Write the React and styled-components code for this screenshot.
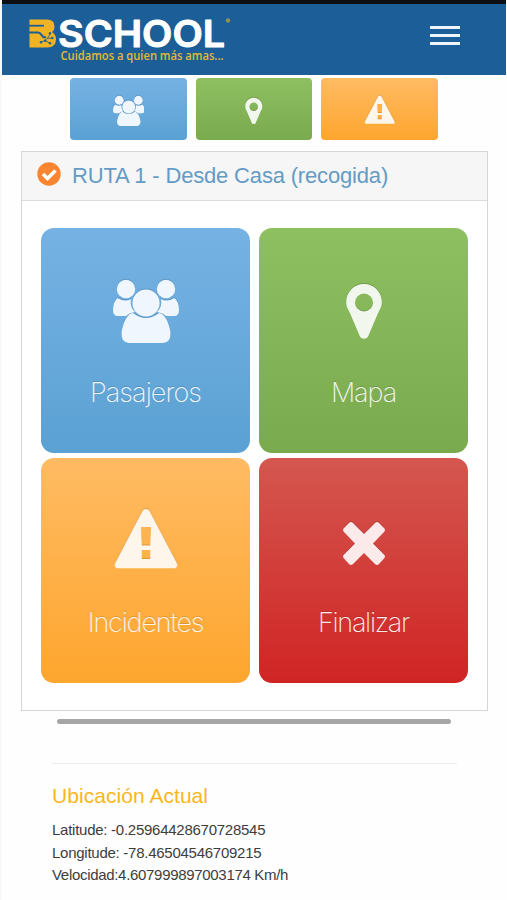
import styled, { createGlobalStyle } from "styled-components"

const GlobalStyle = createGlobalStyle`
    * {
        box-sizing: border-box;
    }
    body {
        margin: 0;
        background-color: #fefefe;
        font-family: "Liberation Sans", Arial, sans-serif;
    }
`

const Container = styled.div`
    height: 900px;
    padding-right: 1px;
    border-left: 2px solid #f8f8f8;
    overflow: hidden;
`

const Header = styled.header`
    height: 75px;
    margin-bottom: 3px;
    padding: 8px 46px 0 25px;
    display: flex;
    justify-content: space-between;
    border-top: 4px solid #0c1013;
    background-color: #1b5e98;
`

const Logo = styled.svg`
    width: 206px;
    height: 58px;
    display: block;
    overflow: visible;
`

const MenuButton = styled.div`
    width: 30px;
    height: 19px;
    margin-top: 14px;
    display: flex;
    flex-direction: column;
    justify-content: space-between;
`

const MenuLine = styled.span`
    height: 3px;
    background-color: #eef5fa;
`

const Shortcuts = styled.nav`
    display: flex;
    justify-content: center;
    gap: 9px;
    margin-bottom: 11px;
`

const Shortcut = styled.div`
    width: 116.6px;
    height: 62px;
    padding-top: 16.5px;
    display: flex;
    justify-content: center;
    border-radius: 4px;
    background-image: linear-gradient(${(props) => props.$colors});
`

const Panel = styled.section`
    width: 467px;
    height: 560px;
    margin-left: 19px;
    border: 1px solid #d6d6d6;
    background-color: #fff;
`

const PanelHeader = styled.div`
    height: 49px;
    padding: 0 0 1px 14.5px;
    display: flex;
    align-items: center;
    gap: 11.5px;
    border-bottom: 1px solid #dcdcdc;
    background-color: #f6f6f6;
`

const CheckIcon = styled.svg`
    width: 24px;
    height: 24px;
    margin-top: -4px;
`

const Title = styled.h1`
    margin: 0;
    font-size: 22px;
    font-weight: 400;
    letter-spacing: -0.17px;
    white-space: nowrap;
    color: #649bc5;
`

const Tiles = styled.div`
    padding: 27px 18px 0 19px;
    display: grid;
    grid-template-columns: 209px 209px;
    grid-auto-rows: 224.5px;
    gap: 5.5px 9px;
`

const Tile = styled.div`
    padding-top: 50px;
    display: flex;
    flex-direction: column;
    align-items: center;
    border-radius: 13px;
    background-image: linear-gradient(${(props) => props.$colors});
`

const Icon = styled.svg`
    width: ${(props) => props.$size}px;
    height: ${(props) => props.$size}px;
    flex-shrink: 0;
    fill: ${(props) => props.$color};
    filter: drop-shadow(0 -1px 0 rgba(0, 0, 0, 0.14));
`

const Label = styled.div`
    margin-top: 32px;
    font-family: Inter, "Liberation Sans", sans-serif;
    font-size: 27px;
    line-height: 34px;
    font-weight: 250;
    letter-spacing: ${(props) => props.$spacing};
    color: ${(props) => props.$color};
    text-shadow: 0 -1px 0 rgba(0, 0, 0, 0.15);
`

const ScrollBar = styled.div`
    width: 394px;
    height: 5px;
    margin: 8px 0 0 55px;
    border-radius: 3px;
    background-color: #a6a6a6;
`

const Location = styled.section`
    width: 405px;
    margin: 39px 0 0 50px;
    padding-top: 20px;
    border-top: 1px solid #eeeeee;
`

const LocationTitle = styled.h2`
    margin: 0 0 11px;
    font-size: 21px;
    line-height: 24px;
    font-weight: 400;
    letter-spacing: 0.05px;
    color: #f8b620;
`

const Info = styled.div`
    font-size: 15px;
    line-height: 22.5px;
    letter-spacing: ${(props) => props.$spacing};
    white-space: nowrap;
    color: #3d3d3d;
`

const UsersShape = () => (
  <>
    <circle cx="13" cy="11" r="9.2" />
    <circle cx="53" cy="11" r="9.2" />
    <path d="M4.5 20Q12 24.5 18 21Q16.5 29 22 34Q16 35 13 38H5Q0 38 0 32Q0 24 4.5 20Z" />
    <path d="M61.5 20Q54 24.5 48 21Q49.5 29 44 34Q50 35 53 38H61Q66 38 66 32Q66 24 61.5 20Z" />
    <circle cx="33" cy="25" r="13.6" />
    <path d="M20 35Q33 45 46 35Q54 36 57.5 54Q58 65 50 65H16Q8 65 8.5 54Q12 36 20 35Z" />
  </>
)

const PinShape = () => (
  <path
    fillRule="evenodd"
    d="M33 6C23 6 15.2 14 15.2 24C15.2 29 17 31 18.5 34L28.5 57.5C30 61.8 36 61.8 37.5 57.5L47.5 34C49 31 50.8 29 50.8 24C50.8 14 43 6 33 6ZM33 15.5A9 9 0 1 1 33 33.5A9 9 0 1 1 33 15.5Z"
  />
)

const WarningShape = () => (
  <path
    fillRule="evenodd"
    d="M29.5 3C31 .3 35 .3 36.5 3L63.5 54.5C65.5 58 63.5 60.3 60.5 60.3H5.5C2.5 60.3 .5 58 2.5 54.5ZM28 19L28.8 37.5H37.2L38 19ZM28.8 42V51H37.2V42Z"
  />
)

const CloseShape = () => (
  <path d="M18 15Q20 13 22 15L33 26L44 15Q46 13 48 15L53 20Q55 22 53 24L42 35.5L53 46.5Q55 48.5 53 50.5L48 56Q46 58 44 56L33 45L22 56Q20 58 18 56L13 50.5Q11 48.5 13 46.5L24 35.5L13 24Q11 22 13 20Z" />
)

const actions = [
  {
    label: "Pasajeros",
    shape: <UsersShape />,
    colors: "#76b2e4, #5ba1d3",
    color: "#eff6fe",
    spacing: "-0.9px",
  },
  {
    label: "Mapa",
    shape: <PinShape />,
    colors: "#8ebf61, #7aaa4e",
    color: "#f1f7ed",
    spacing: "-1.1px",
  },
  {
    label: "Incidentes",
    shape: <WarningShape />,
    colors: "#ffbb63, #fea62e",
    color: "#fff6eb",
    spacing: "-1.15px",
  },
  {
    label: "Finalizar",
    shape: <CloseShape />,
    colors: "#d4574f, #d02424",
    color: "#fce9e9",
    spacing: "-1.3px",
  },
]

const BrandLogo = () => (
  <Logo viewBox="27 12 206 58">
    <path
      fill="#f0b323"
      d="M29.5 19.5H47Q54.5 19.5 54.5 26.5Q54.5 30.5 52 32Q56 34.5 56 39Q56 47.5 47.5 47.5H29.5Z"
    />
    <g fill="none" stroke="#1b5e98">
      <path strokeWidth="1.8" d="M29 25.7H44" />
      <path strokeWidth="2" d="M29 32.5H38Q40 32.5 41.5 35L43.5 37.2H46" />
      <path strokeWidth="0.8" d="M45 40.5L48.5 37L50 33.5M47 38.5L52 38M41 42L45 40.5L49.5 43" />
    </g>
    <g fill="#1b5e98">
      <circle cx="50" cy="33.3" r="1.2" />
      <circle cx="52.3" cy="38" r="1.2" />
      <circle cx="50" cy="43.2" r="1.2" />
      <circle cx="45.2" cy="40.8" r="1.3" />
      <circle cx="41" cy="42.2" r="1.2" />
    </g>
    <text
      x="58"
      y="46.5"
      fill="#fff"
      stroke="#fff"
      strokeWidth="1"
      strokeLinejoin="round"
      fontFamily="Inter, Liberation Sans, sans-serif"
      fontSize="36.5"
      fontWeight="600"
      textLength="167"
      lengthAdjust="spacingAndGlyphs"
    >
      SCHOOL
    </text>
    <text
      x="60.5"
      y="60"
      fill="#e5b936"
      fontFamily="Open Sans, Noto Sans, sans-serif"
      fontSize="12.3"
      fontWeight="600"
      textLength="163"
      lengthAdjust="spacingAndGlyphs"
    >
      Cuidamos a quien más amas...
    </text>
    <circle cx="228" cy="20.5" r="1.7" fill="#8c8d58" stroke="#b69c3e" strokeWidth="0.8" />
  </Logo>
)

const App = () => {
  return (
    <Container>
      <GlobalStyle />
      <Header>
        <BrandLogo />
        <MenuButton>
          <MenuLine />
          <MenuLine />
          <MenuLine />
        </MenuButton>
      </Header>
      <Shortcuts>
        {actions.slice(0, 3).map((item) => (
          <Shortcut key={item.label} $colors={item.colors}>
            <Icon viewBox="0 0 66 66" $size={31.5} $color={item.color}>
              {item.shape}
            </Icon>
          </Shortcut>
        ))}
      </Shortcuts>
      <Panel>
        <PanelHeader>
          <CheckIcon viewBox="0 0 24 24">
            <circle cx="12" cy="12" r="11.7" fill="#fb8430" />
            <path d="M6 12L10.5 16.5L18.5 8.5" fill="none" stroke="#fff" strokeWidth="3.6" />
          </CheckIcon>
          <Title>RUTA 1 - Desde Casa (recogida)</Title>
        </PanelHeader>
        <Tiles>
          {actions.map((item) => (
            <Tile key={item.label} $colors={item.colors}>
              <Icon viewBox="0 0 66 66" $size={66} $color={item.color}>
                {item.shape}
              </Icon>
              <Label $color={item.color} $spacing={item.spacing}>
                {item.label}
              </Label>
            </Tile>
          ))}
        </Tiles>
      </Panel>
      <ScrollBar />
      <Location>
        <LocationTitle>Ubicación Actual</LocationTitle>
        <Info $spacing="-0.26px">Latitude: -0.25964428670728545</Info>
        <Info $spacing="-0.26px">Longitude: -78.46504546709215</Info>
        <Info $spacing="-0.31px">Velocidad:4.607999897003174 Km/h</Info>
      </Location>
    </Container>
  )
}

export default App
